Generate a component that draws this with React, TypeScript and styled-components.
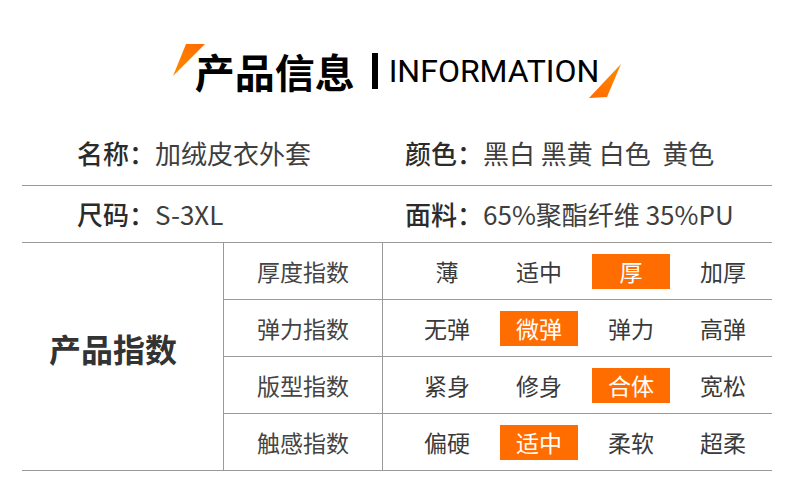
import React from "react";
import styled, { createGlobalStyle } from "styled-components";

const Global = createGlobalStyle`
  html, body { margin: 0; padding: 0; background: #fff; }
  body { font-family: "Noto Sans CJK SC", "Noto Sans", sans-serif; }
`;

const Page = styled.div`
  width: 790px;
  height: 488px;
  background: #fff;
  overflow: hidden;
`;

const Header = styled.div`
  height: 129px;
  display: flex;
  justify-content: center;
  align-items: flex-start;
  padding-top: 42px;
  box-sizing: border-box;
`;

const TitleWrap = styled.div`
  position: relative;
  display: flex;
  align-items: center;
  margin-left: 4px;
`;

const TitleCn = styled.div`
  font-size: 40px;
  line-height: 58px;
  font-weight: 700;
  color: #000;
`;

const Bar = styled.div`
  width: 6px;
  height: 36px;
  background: #000;
  margin: 0 11px 0 17px;
`;

const TitleEn = styled.div`
  font-family: Roboto, "Liberation Sans", sans-serif;
  font-size: 32px;
  line-height: 58px;
  color: #000;
  font-weight: 400;
`;

const Slash = styled.svg<{ $side: "left" | "right" }>`
  position: absolute;
  ${(p) => (p.$side === "left" ? "left: -22px; top: 2px;" : "right: -24px; top: 22px;")}
`;

const Content = styled.div`
  margin: 0 18px 0 22px;
`;

const InfoRow = styled.div<{ $lift: number }>`
  display: grid;
  grid-template-columns: 361px 1fr;
  height: 57px;
  padding-bottom: ${(p) => p.$lift}px;
  border-bottom: 1px solid #9a9a9a;
  box-sizing: border-box;
  align-items: center;
`;

const InfoCell = styled.div<{ $pad: number }>`
  padding-left: ${(p) => p.$pad}px;
  font-size: 26px;
  line-height: 36px;
  white-space: pre;
  color: #3e3e3e;
`;

const Label = styled.span`
  font-weight: 500;
  color: #2b2b2b;
`;

const Table = styled.div`
  display: grid;
  grid-template-columns: 202px 159px 1fr;
`;

const GroupCell = styled.div`
  grid-row: span 4;
  border-right: 1px solid #9a9a9a;
  border-bottom: 1px solid #9a9a9a;
  display: flex;
  align-items: center;
  justify-content: center;
  padding: 0 19px 18px 0;
  font-size: 32px;
  font-weight: 700;
  color: #333;
`;

const NameCell = styled.div`
  height: 57px;
  box-sizing: border-box;
  border-right: 1px solid #9a9a9a;
  border-bottom: 1px solid #9a9a9a;
  display: flex;
  align-items: center;
  justify-content: center;
  font-size: 23px;
  color: #444;
`;

const OptionsCell = styled.div`
  height: 57px;
  box-sizing: border-box;
  border-bottom: 1px solid #9a9a9a;
  display: grid;
  grid-template-columns: repeat(4, 92px);
  align-items: center;
  justify-items: center;
  padding-left: 18px;
`;

const Option = styled.div<{ $on: boolean }>`
  width: 78px;
  height: 35px;
  display: flex;
  align-items: center;
  justify-content: center;
  font-size: 23px;
  color: ${(p) => (p.$on ? "#fff" : "#3a3a3a")};
  background: ${(p) => (p.$on ? "#ff6d00" : "transparent")};
`;

const rows = [
  { name: "厚度指数", opts: ["薄", "适中", "厚", "加厚"], on: 2 },
  { name: "弹力指数", opts: ["无弹", "微弹", "弹力", "高弹"], on: 1 },
  { name: "版型指数", opts: ["紧身", "修身", "合体", "宽松"], on: 2 },
  { name: "触感指数", opts: ["偏硬", "适中", "柔软", "超柔"], on: 1 },
];

export default function App() {
  return (
    <Page>
      <Global />
      <Header>
        <TitleWrap>
          <Slash $side="left" width="34" height="34" viewBox="0 0 34 34">
            <defs>
              <linearGradient id="ga" x1="0" y1="1" x2="1" y2="0">
                <stop offset="0" stopColor="#ff8a00" />
                <stop offset="1" stopColor="#ff6a00" />
              </linearGradient>
            </defs>
            <polygon points="13,0 32,0 0,32" fill="url(#ga)" />
          </Slash>
          <TitleCn>产品信息</TitleCn>
          <Bar />
          <TitleEn>INFORMATION</TitleEn>
          <Slash $side="right" width="34" height="36" viewBox="0 0 34 36">
            <defs>
              <linearGradient id="gb" x1="0" y1="1" x2="1" y2="0">
                <stop offset="0" stopColor="#ff6a00" />
                <stop offset="1" stopColor="#ff8a00" />
              </linearGradient>
            </defs>
            <polygon points="32,0 18,33 0,34" fill="url(#gb)" />
          </Slash>
        </TitleWrap>
      </Header>
      <Content>
        <InfoRow $lift={8}>
          <InfoCell $pad={55}>
            <Label>名称：</Label>加绒皮衣外套
          </InfoCell>
          <InfoCell $pad={22}>
            <Label>颜色：</Label>黑白 黑黄 白色  黄色
          </InfoCell>
        </InfoRow>
        <InfoRow $lift={0}>
          <InfoCell $pad={55}>
            <Label>尺码：</Label>S-3XL
          </InfoCell>
          <InfoCell $pad={22}>
            <Label>面料：</Label>65%聚酯纤维 35%PU
          </InfoCell>
        </InfoRow>
        <Table>
          <GroupCell>产品指数</GroupCell>
          {rows.map((r) => (
            <React.Fragment key={r.name}>
              <NameCell>{r.name}</NameCell>
              <OptionsCell>
                {r.opts.map((o, i) => (
                  <Option key={o + i} $on={i === r.on}>
                    {o}
                  </Option>
                ))}
              </OptionsCell>
            </React.Fragment>
          ))}
        </Table>
      </Content>
    </Page>
  );
}
